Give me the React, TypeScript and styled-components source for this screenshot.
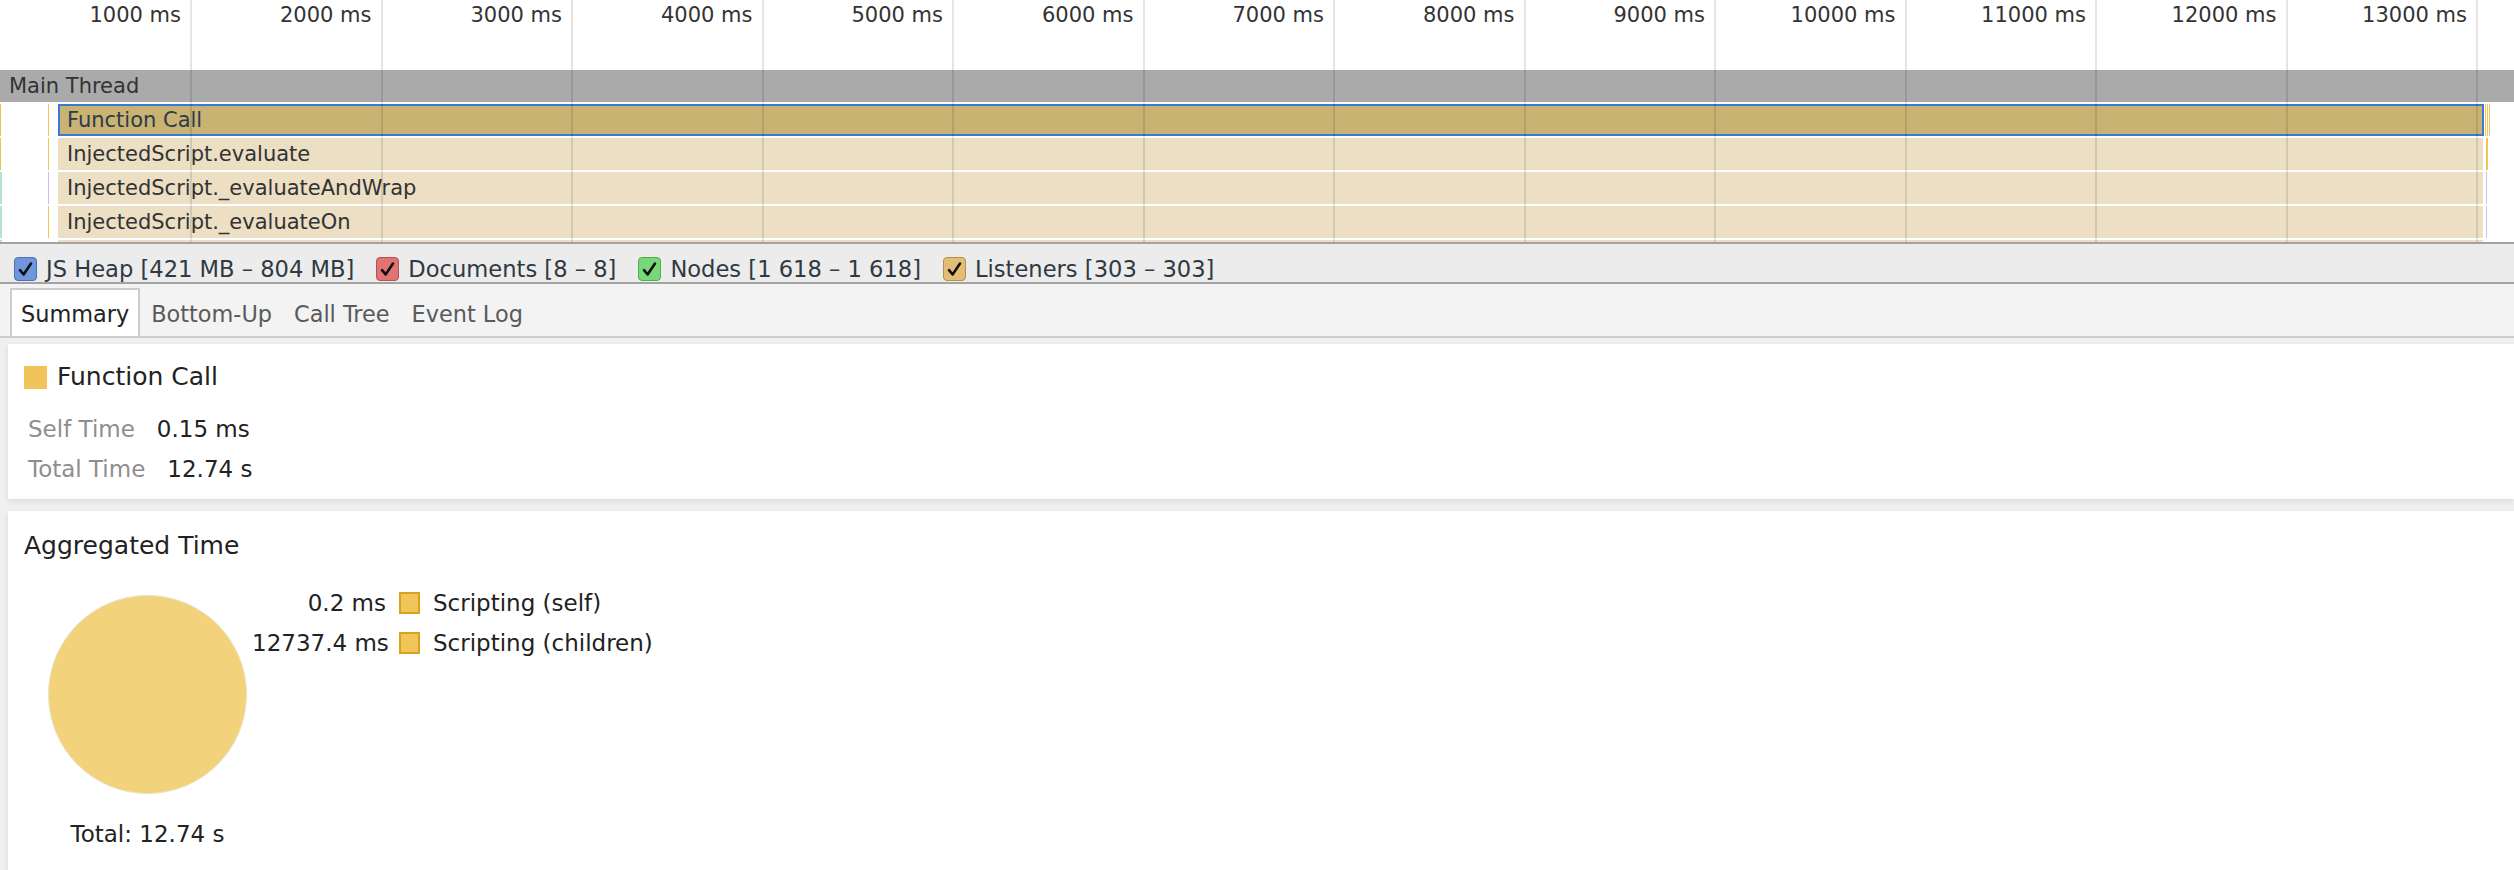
import React from 'react';
import styled, { createGlobalStyle } from 'styled-components';

const GlobalStyle = createGlobalStyle`
  html, body {
    margin: 0;
    padding: 0;
  }
  body {
    background: #f0f0f0;
    font-family: 'DejaVu Sans', 'Open Sans', sans-serif;
    color: #303942;
    overflow: hidden;
  }
`;

const TICK = 190.5;
const FIRST_LINE = 190;
const ticks = Array.from({ length: 13 }, (_, i) => (i + 1) * 1000);

const ROW_PITCH = 34;

type FlameBar = {
  row: number;
  left: number;
  width: number;
  color: string;
  label?: string;
  selected?: boolean;
};

const bars: FlameBar[] = [
  { row: 0, left: 58, width: 2426, color: '#c9b372', label: 'Function Call', selected: true },
  { row: 1, left: 58, width: 2425, color: '#ecdfc4', label: 'InjectedScript.evaluate' },
  { row: 2, left: 58, width: 2425, color: '#ecdfc4', label: 'InjectedScript._evaluateAndWrap' },
  { row: 3, left: 58, width: 2425, color: '#ecdfc4', label: 'InjectedScript._evaluateOn' },
  { row: 4, left: 58, width: 2425, color: '#ecdfc4' },
];

// tiny events at both ends of the recording
const markers: FlameBar[] = [
  { row: 0, left: 0, width: 1, color: '#f1c24a' },
  { row: 1, left: 0, width: 1, color: '#f1c24a' },
  { row: 2, left: 0, width: 2, color: '#b5e2d2' },
  { row: 3, left: 0, width: 2, color: '#b5e2d2' },
  { row: 4, left: 0, width: 2, color: '#b5e2d2' },
  { row: 0, left: 48, width: 1, color: '#f2c452' },
  { row: 1, left: 48, width: 1, color: '#f2c452' },
  { row: 2, left: 48, width: 1, color: '#c6befa' },
  { row: 3, left: 48, width: 1, color: '#f2c452' },
  { row: 0, left: 2485, width: 1, color: '#f2c452' },
  { row: 0, left: 2487, width: 1, color: '#f2c452' },
  { row: 0, left: 2489, width: 1, color: '#f2c452' },
  { row: 1, left: 2486, width: 1.5, color: '#f2c452' },
  { row: 2, left: 2486, width: 1, color: '#c6befa' },
  { row: 3, left: 2486, width: 1, color: '#c6befa' },
];

const Timeline = styled.div`
  position: relative;
  height: 242px;
  background: #fff;
  border-bottom: 2px solid #a3a3a3;
  overflow: hidden;
`;

const Ruler = styled.div`
  display: flex;
  height: 70px;
  padding-left: 0.5px;
`;

const TickLabel = styled.div`
  flex: 0 0 ${TICK}px;
  box-sizing: border-box;
  padding-right: 10px;
  text-align: right;
  font-size: 21px;
  line-height: 30px;
  color: #333;
  white-space: nowrap;
`;

const TrackHeader = styled.div`
  height: 32px;
  padding-left: 9px;
  background: #aaa;
  color: #333;
  font-size: 21px;
  line-height: 32px;
`;

const FlameArea = styled.div`
  position: relative;
  height: 140px;
`;

const Bar = styled.div<{ $color: string; $selected?: boolean }>`
  position: absolute;
  height: 32px;
  box-sizing: border-box;
  background: ${(p) => p.$color};
  border: ${(p) => (p.$selected ? '2px solid #3879d9' : 'none')};
  padding-left: ${(p) => (p.$selected ? '7px' : '9px')};
  line-height: ${(p) => (p.$selected ? '28px' : '32px')};
  font-size: 21px;
  color: ${(p) => (p.$selected ? '#2e3a4d' : '#333')};
  white-space: nowrap;
  overflow: hidden;
`;

const Marker = styled.div<{ $color: string }>`
  position: absolute;
  height: 32px;
  background: ${(p) => p.$color};
`;

const GridLine = styled.div`
  position: absolute;
  top: 0;
  bottom: 0;
  width: 2px;
  background: rgba(0, 0, 0, 0.1);
  pointer-events: none;
`;

const Counters = styled.div`
  display: flex;
  align-items: center;
  gap: 22px;
  height: 40px;
  box-sizing: border-box;
  padding: 12px 0 0 14px;
  background: #ececec;
  border-bottom: 2px solid #a3a3a3;
  font-size: 22.6px;
  color: #303942;
`;

const Counter = styled.label`
  display: flex;
  align-items: center;
  gap: 9px;
  white-space: nowrap;
`;

const CheckBox = styled.span<{ $fill: string; $edge: string }>`
  display: flex;
  align-items: center;
  justify-content: center;
  width: 23px;
  height: 24px;
  box-sizing: border-box;
  border-radius: 4px;
  background: ${(p) => p.$fill};
  border: 1.5px solid ${(p) => p.$edge};
`;

const TabBar = styled.div`
  display: flex;
  align-items: flex-end;
  height: 54px;
  box-sizing: border-box;
  padding-left: 10px;
  background: #f3f3f3;
  border-bottom: 2px solid #cdcdcd;
`;

const Tab = styled.div<{ $active?: boolean }>`
  height: 48px;
  box-sizing: border-box;
  padding: 0 9px;
  border: 2px solid ${(p) => (p.$active ? '#cdcdcd' : 'transparent')};
  border-bottom: none;
  background: ${(p) => (p.$active ? '#fff' : 'transparent')};
  color: ${(p) => (p.$active ? '#222' : '#5a5a5a')};
  font-size: 22.4px;
  line-height: 48px;
  white-space: nowrap;
`;

const Details = styled.div`
  display: flex;
  flex-direction: column;
  gap: 12px;
  padding: 6px 0 0 8px;
`;

const Card = styled.section`
  background: #fff;
  box-shadow: 0 2px 6px rgba(0, 0, 0, 0.1);
  padding: 16px 0 10px 16px;
`;

const TitleRow = styled.div`
  display: flex;
  align-items: center;
  gap: 10px;
  height: 34px;
  margin-bottom: 15px;
`;

const Swatch = styled.span<{ $color: string; $edge?: string }>`
  display: inline-block;
  width: 23px;
  height: 23px;
  box-sizing: border-box;
  background: ${(p) => p.$color};
  border: ${(p) => (p.$edge ? `2px solid ${p.$edge}` : 'none')};
`;

const Title = styled.div`
  font-size: 25px;
  line-height: 34px;
  color: #222;
`;

const InfoRow = styled.div`
  display: flex;
  gap: 22px;
  padding-left: 4px;
  font-size: 23px;
  line-height: 40px;
`;

const InfoLabel = styled.span`
  color: #8e8e8e;
`;

const InfoValue = styled.span`
  color: #222;
`;

const AggregatedCard = styled(Card)`
  padding-top: 18px;
  height: 400px;
`;

const ChartRow = styled.div`
  display: flex;
  align-items: flex-start;
  margin-top: 20px;
  padding-left: 24px;
`;

const PieColumn = styled.div`
  display: flex;
  flex-direction: column;
  align-items: center;
  width: 199px;
  padding-top: 12px;
`;

const PieTotal = styled.div`
  margin-top: 20px;
  font-size: 23px;
  line-height: 40px;
  color: #222;
  white-space: nowrap;
`;

const Legend = styled.div`
  display: grid;
  grid-template-columns: 134px 21px auto;
  grid-auto-rows: 40px;
  align-items: center;
  column-gap: 13px;
  margin-left: 5px;
  font-size: 23px;
  color: #222;
`;

const LegendValue = styled.span`
  text-align: right;
  white-space: nowrap;
`;

const LegendLabel = styled.span`
  white-space: nowrap;
`;

const Check = () => (
  <svg width="17" height="17" viewBox="0 0 17 17">
    <path d="M3 9.2 L6.6 13.4 L14 2.6" fill="none" stroke="#111" strokeWidth="2.6" strokeLinecap="round" strokeLinejoin="round" />
  </svg>
);

const counters = [
  { label: 'JS Heap [421 MB – 804 MB]', fill: '#6f96de', edge: '#4d70b3' },
  { label: 'Documents [8 – 8]', fill: '#e07474', edge: '#b35252' },
  { label: 'Nodes [1 618 – 1 618]', fill: '#76d877', edge: '#4fae50' },
  { label: 'Listeners [303 – 303]', fill: '#e2bd74', edge: '#b3904f' },
];

const tabs = ['Summary', 'Bottom-Up', 'Call Tree', 'Event Log'];

const legend = [
  { value: '0.2 ms', label: 'Scripting (self)' },
  { value: '12737.4 ms', label: 'Scripting (children)' },
];

const App = (): JSX.Element => (
  <>
    <GlobalStyle />
    <Timeline>
      <Ruler>
        {ticks.map((t) => (
          <TickLabel key={t}>{t} ms</TickLabel>
        ))}
      </Ruler>
      <TrackHeader>Main Thread</TrackHeader>
      <FlameArea>
        {bars.map((b, i) => (
          <Bar
            key={i}
            $color={b.color}
            $selected={b.selected}
            style={{ left: b.left, width: b.width, top: 2 + b.row * ROW_PITCH }}
          >
            {b.label}
          </Bar>
        ))}
        {markers.map((m, i) => (
          <Marker
            key={i}
            $color={m.color}
            style={{ left: m.left, width: m.width, top: 2 + m.row * ROW_PITCH }}
          />
        ))}
      </FlameArea>
      {ticks.map((t, i) => (
        <GridLine key={t} style={{ left: FIRST_LINE + i * TICK }} />
      ))}
    </Timeline>

    <Counters>
      {counters.map((c) => (
        <Counter key={c.label}>
          <CheckBox $fill={c.fill} $edge={c.edge}>
            <Check />
          </CheckBox>
          {c.label}
        </Counter>
      ))}
    </Counters>

    <TabBar>
      {tabs.map((t, i) => (
        <Tab key={t} $active={i === 0}>
          {t}
        </Tab>
      ))}
    </TabBar>

    <Details>
      <Card>
        <TitleRow>
          <Swatch $color="#f0c45a" />
          <Title>Function Call</Title>
        </TitleRow>
        <InfoRow>
          <InfoLabel>Self Time</InfoLabel>
          <InfoValue>0.15 ms</InfoValue>
        </InfoRow>
        <InfoRow>
          <InfoLabel>Total Time</InfoLabel>
          <InfoValue>12.74 s</InfoValue>
        </InfoRow>
      </Card>

      <AggregatedCard>
        <Title>Aggregated Time</Title>
        <ChartRow>
          <PieColumn>
            <svg width="199" height="199" viewBox="0 0 199 199">
              <circle cx="99.5" cy="99.5" r="99" fill="#f2d27b" stroke="#e9e0c6" strokeWidth="1" />
            </svg>
            <PieTotal>Total: 12.74 s</PieTotal>
          </PieColumn>
          <Legend>
            {legend.map((l) => (
              <React.Fragment key={l.label}>
                <LegendValue>{l.value}</LegendValue>
                <Swatch $color="#f0c55a" $edge="#d9a21c" style={{ width: 21, height: 22 }} />
                <LegendLabel>{l.label}</LegendLabel>
              </React.Fragment>
            ))}
          </Legend>
        </ChartRow>
      </AggregatedCard>
    </Details>
  </>
);

export default App;
